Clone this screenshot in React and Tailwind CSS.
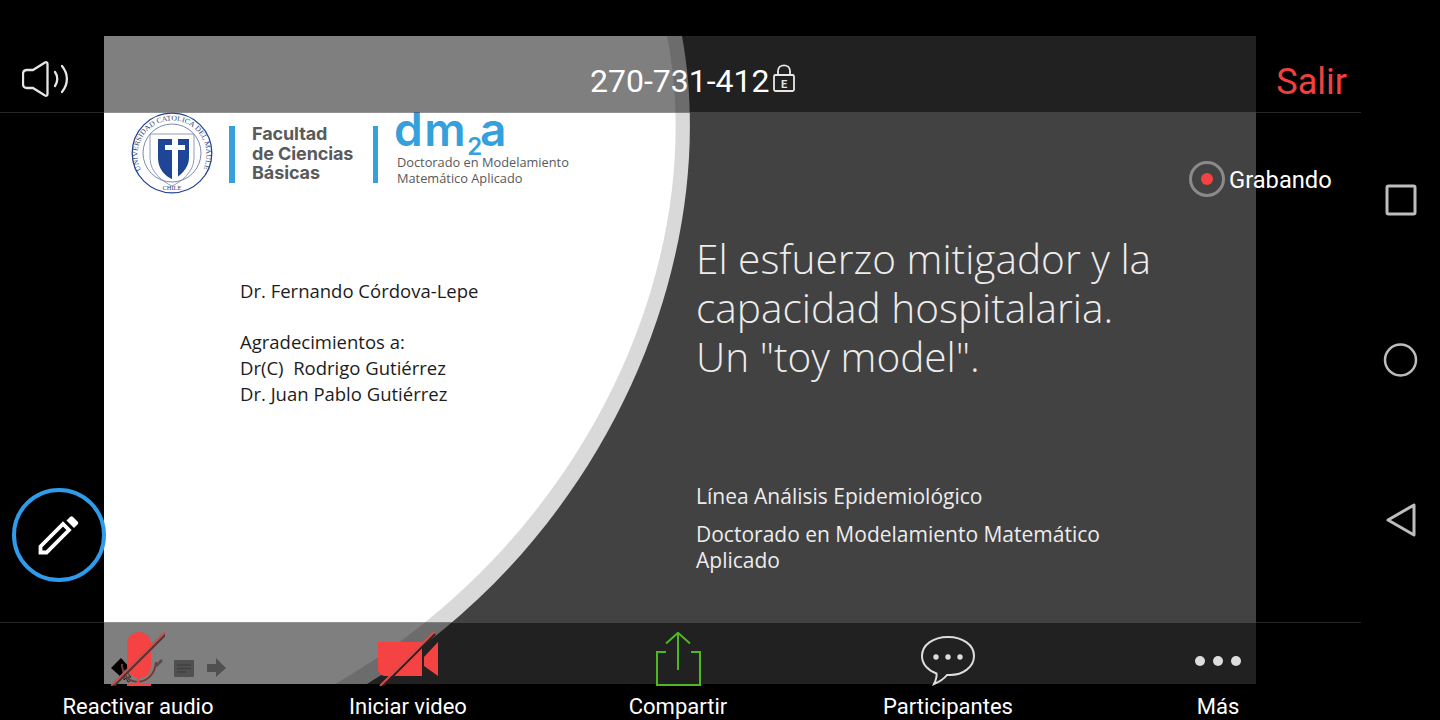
import React from "react";

const ROBOTO = "font-['Roboto',sans-serif]";
const SLIDE_FONT = "font-['Open_Sans',sans-serif]";

function SlideBackground() {
  return (
    <svg className="absolute inset-0" width="1152" height="648" viewBox="0 0 1152 648">
      <path d="M578 0 C618 220 505 500 263 648 L0 648 L0 0 Z" fill="#d9d9da" />
      <path d="M563 0 C606 220 487 500 231 648 L0 648 L0 0 Z" fill="#ffffff" />
    </svg>
  );
}

function Seal() {
  return (
    <svg width="82" height="82" viewBox="0 0 82 82" className="shrink-0">
      <defs>
        <path id="sealRing" d="M10 58 a34.5 34.5 0 1 1 62 0" />
      </defs>
      <circle cx="41" cy="41" r="39.8" fill="none" stroke="#26468f" strokeWidth="1.3" />
      <circle cx="41" cy="41" r="29" fill="none" stroke="#5a6c9c" strokeWidth="0.8" />
      <text fontSize="7.2" fill="#2b3f78" fontFamily="Liberation Serif, serif">
        <textPath href="#sealRing" textLength="138" lengthAdjust="spacingAndGlyphs">UNIVERSIDAD CATOLICA DEL MAULE</textPath>
      </text>
      <text x="41" y="78" textAnchor="middle" fontSize="6.5" fill="#2b3f78" fontFamily="Liberation Serif, serif">CHILE</text>
      <path d="M19 22 H63 V46 C63 60 50 70 41 74 C32 70 19 60 19 46 Z" fill="none" stroke="#7483aa" strokeWidth="0.8" />
      <path d="M27 27 H58 V46 C58 57 48 64 42.500 68 C34 64 27 57 27 46 Z" fill="#1f4596" />
      <path d="M41 27 H47 V33 H54 V38 H47 V68 H41 V38 H34 V33 H41 Z" fill="#ffffff" />
    </svg>
  );
}

function LogoRow() {
  return (
    <div className="flex items-start h-[82px]">
      <Seal />
      <div className="w-[6px] h-[57px] mt-[14px] ml-[16px] bg-[#35a0dc] shrink-0" />
      <div className="w-[121px] ml-[17px] mt-[12px] font-['Inter',sans-serif] font-bold text-[18px] tracking-[-0.1px] leading-[19.500px] text-[#595a5c] shrink-0">
        <div>Facultad</div>
        <div>de Ciencias</div>
        <div>Básicas</div>
      </div>
      <div className="w-[5px] h-[57px] mt-[14px] bg-[#35a0dc] shrink-0" />
      <div className="ml-[19px] shrink-0">
        <div className="flex items-start h-[37px] text-[#35a0dc] font-['Inter',sans-serif] font-semibold leading-none -ml-[3px]">
          <span className="text-[46px] leading-[46px] -mt-[6px] tracking-[1.5px]">dm</span>
          <span className="text-[24px] leading-[20px] mt-[25px]">2</span>
          <span className="text-[46px] leading-[46px] -mt-[6px] -ml-[2px]">a</span>
        </div>
        <div className="mt-[6px] font-['Open_Sans',sans-serif] text-[12.800px] leading-[15.500px] text-[#58595b] whitespace-nowrap">
          <div>Doctorado en Modelamiento</div>
          <div>Matemático Aplicado</div>
        </div>
      </div>
    </div>
  );
}

function PresenterTools() {
  return (
    <svg className="absolute left-0 bottom-0" width="130" height="34" viewBox="0 0 130 34">
      <path d="M7 18 L17 8 L26 18 L17 27 Z" fill="#000000" />
      <path d="M51 15 L57 9 L59 11 L53 17 Z" fill="#a0a0a0" />
      <rect x="70" y="10" width="20" height="17" rx="1" fill="#a0a0a0" />
      <path d="M73 15 H87 M73 18.500 H87 M73 22 H82" stroke="#808080" strokeWidth="1.300" />
      <path d="M103 14 H112 V8 L122 18 L112 27 V22 H103 Z" fill="#a0a0a0" />
      <path d="M20 19 V30 L22 28 L24 32 L26 31 L24 27 L27 27 Z" fill="#ffffff" stroke="#000000" strokeWidth="0.700" />
    </svg>
  );
}

function Slide() {
  return (
    <div className={`relative w-[1152px] h-[648px] bg-[#424242] overflow-hidden ${SLIDE_FONT}`}>
      <SlideBackground />
      <div className="relative grid grid-cols-[592px_1fr]">
        <div className="pl-[27px] pt-[76px]">
          <LogoRow />
          <div className="ml-[109px] mt-[84px] text-[18.500px] leading-[25.700px] text-[#1c1c1c] whitespace-nowrap">
            <div>Dr. Fernando Córdova-Lepe</div>
            <div className="h-[25.700px]" />
            <div>Agradecimientos a:</div>
            <div>Dr(C)&nbsp; Rodrigo Gutiérrez</div>
            <div>Dr. Juan Pablo Gutiérrez</div>
          </div>
        </div>
        <div className="pt-[198px] text-[#ececec] pr-[120px]">
          <h1 className="text-[40.600px] leading-[49px] font-light whitespace-nowrap">
            El esfuerzo mitigador y la
            <br />
            capacidad hospitalaria.
            <br />
            Un "toy model".
          </h1>
          <p className="mt-[102px] text-[21px] leading-[26px]">Línea Análisis Epidemiológico</p>
          <p className="mt-[12px] text-[21px] leading-[26px]">Doctorado en Modelamiento Matemático Aplicado</p>
        </div>
      </div>
      <PresenterTools />
    </div>
  );
}

function SpeakerIcon() {
  return (
    <svg width="47" height="36" viewBox="0 0 47 36" fill="none" stroke="#e6e6e6" strokeWidth="2.300" strokeLinecap="round" strokeLinejoin="round">
      <path d="M5 9 H11 L23 1.500 C24.500 .8 25.500 1.500 25.500 3 V33 C25.500 34.500 24.500 35.200 23 34.500 L11 27 H5 C2.500 27 1 25.500 1 23 V13 C1 10.500 2.500 9 5 9 Z" />
      <path d="M33 11 C36 15 36 21 33 25" />
      <path d="M40 5 C46.500 13 46.500 23 40 31" />
    </svg>
  );
}

function LockIcon() {
  return (
    <svg width="24" height="28" viewBox="0 0 24 28" fill="none" stroke="#e6e6e6" strokeWidth="1.800">
      <path d="M6 11 V7 C6 -0.500 18 -0.500 18 7 V11" />
      <rect x="2" y="11" width="20" height="16" rx="1.500" />
      <text x="12" y="24" textAnchor="middle" fontSize="11" fontWeight="700" fill="#e6e6e6" stroke="none" fontFamily="Roboto, sans-serif">E</text>
    </svg>
  );
}

function TopBar() {
  return (
    <div className={`absolute left-0 top-[36px] w-[1361px] h-[77px] flex items-center bg-black/50 border-b border-white/15 ${ROBOTO}`}>
      <div className="ml-[22px] mt-[10px]">
        <SpeakerIcon />
      </div>
      <span className="ml-[521px] text-[32px] leading-none mt-[13px] text-white">270-731-412</span>
      <span className="ml-[2px] mt-[8px]">
        <LockIcon />
      </span>
      <span className="ml-auto mr-[14px] mt-[15px] text-[36px] leading-none text-[#f04040]">Salir</span>
    </div>
  );
}

function MicIcon() {
  return (
    <svg width="54" height="54" viewBox="0 0 54 54" fill="none">
      <rect x="16" y="0" width="24" height="46" rx="12" fill="#f54242" />
      <path d="M11 32 C11 56 43 56 45 30" stroke="#7a3a3a" strokeWidth="2" />
      <path d="M27 46 V54 M16 53 H40" stroke="#f54242" strokeWidth="2.500" />
      <path d="M3 54 L55 2" stroke="#5a3030" strokeWidth="2" />
      <path d="M0 54 L54 0" stroke="#c95050" strokeWidth="2" />
    </svg>
  );
}

function VideoIcon() {
  return (
    <svg width="60" height="54" viewBox="0 0 60 54" fill="none">
      <path d="M0 10 H44 V44 H7 C3 44 0 41 0 37 Z" fill="#f54242" />
      <path d="M46 25 L60 10 V44 L46 34 Z" fill="#f54242" />
      <path d="M5 54 L57 2" stroke="#3a1c1c" strokeWidth="2" />
      <path d="M2 54 L56 0" stroke="#d05050" strokeWidth="2" />
    </svg>
  );
}

function ShareIcon() {
  return (
    <svg width="46" height="54" viewBox="0 0 46 54" fill="none" stroke="#4fb81f" strokeWidth="2">
      <path d="M23 1 V38" />
      <path d="M11 11.500 L23 0.800 L35 11.500" />
      <path d="M11 20 H2 V53 H45 V20 H36" />
    </svg>
  );
}

function ChatIcon() {
  return (
    <svg width="56" height="54" viewBox="0 0 56 54" fill="none">
      <path d="M28 5 C43 5 54 13 54 24 C54 35 43 43 30 43 H27 C23 48 19 50 14 52 C16 48 17 45 16.500 41.500 C8 38.500 2 32 2 24 C2 13 13 5 28 5 Z" stroke="#dddddd" strokeWidth="2" />
      <circle cx="16" cy="25" r="2.700" fill="#dddddd" />
      <circle cx="28" cy="25" r="2.700" fill="#dddddd" />
      <circle cx="40" cy="25" r="2.700" fill="#dddddd" />
    </svg>
  );
}

function MoreIcon() {
  return (
    <svg width="46" height="54" viewBox="0 0 46 54" fill="#dddddd">
      <circle cx="5" cy="29" r="5" />
      <circle cx="23" cy="29" r="5" />
      <circle cx="41" cy="29" r="5" />
    </svg>
  );
}

const tools = [
  { label: "Reactivar audio", icon: <MicIcon /> },
  { label: "Iniciar video", icon: <VideoIcon /> },
  { label: "Compartir", icon: <ShareIcon /> },
  { label: "Participantes", icon: <ChatIcon /> },
  { label: "Más", icon: <MoreIcon /> },
];

function BottomBar() {
  return (
    <div className={`absolute left-0 top-[622px] w-[1361px] h-[98px] pl-[3px] grid grid-cols-[repeat(5,270px)] bg-black/50 border-t border-white/15 ${ROBOTO}`}>
      {tools.map((t) => (
        <div key={t.label} className="flex flex-col items-center pt-[9px]">
          <div className="h-[54px] flex items-end">{t.icon}</div>
          <span className="mt-[8px] text-[22px] leading-[26px] text-white whitespace-nowrap">{t.label}</span>
        </div>
      ))}
    </div>
  );
}

function RecordingBadge() {
  return (
    <div className={`absolute left-[1189px] top-[161px] flex items-center gap-[4px] ${ROBOTO}`}>
      <span className="w-[36px] h-[36px] rounded-full border-[3px] border-[#8a8a8a] flex items-center justify-center">
        <span className="w-[12px] h-[12px] rounded-full bg-[#f54242]" />
      </span>
      <span className="text-[23.700px] leading-none mt-[4px] text-white">Grabando</span>
    </div>
  );
}

function AnnotateButton() {
  return (
    <button className="absolute left-[12px] top-[488px] w-[94px] h-[94px] rounded-full border-[4px] border-[#2f9ceb] flex items-center justify-center">
      <svg width="44" height="40" viewBox="0 0 44 40" fill="none">
        <path d="M3.500 37.500 V31.500 L26 9 L32 15 L9.500 37.500 Z" stroke="#ffffff" strokeWidth="3.800" strokeLinejoin="miter" />
        <path d="M29.500 5.500 L33 2 C34 1 35 1 36 2 L40.500 6.500 C41.500 7.500 41.500 8.500 40.500 9.500 L37 13 Z" fill="#ffffff" />
      </svg>
    </button>
  );
}

function NavRail() {
  return (
    <div className="w-[79px] h-[720px] flex flex-col items-center justify-center gap-[120px] shrink-0">
      <svg width="40" height="40" viewBox="0 0 40 40" fill="none" stroke="#bdbdbd" strokeWidth="3">
        <rect x="6" y="6" width="28" height="28" rx="1.500" />
      </svg>
      <svg width="40" height="40" viewBox="0 0 40 40" fill="none" stroke="#bdbdbd" strokeWidth="2.500">
        <circle cx="19.500" cy="20" r="15.500" />
      </svg>
      <svg width="40" height="40" viewBox="0 0 40 40" fill="none" stroke="#bdbdbd" strokeWidth="3" strokeLinejoin="round">
        <path d="M7 20 L33 5 V35 Z" />
      </svg>
    </div>
  );
}

export default function App() {
  return (
    <div className="w-[1440px] h-[720px] bg-black flex overflow-hidden">
      <div className="relative w-[1361px] h-[720px] pl-[104px] pt-[36px] shrink-0">
        <Slide />
        <TopBar />
        <BottomBar />
        <RecordingBadge />
        <AnnotateButton />
      </div>
      <NavRail />
    </div>
  );
}
